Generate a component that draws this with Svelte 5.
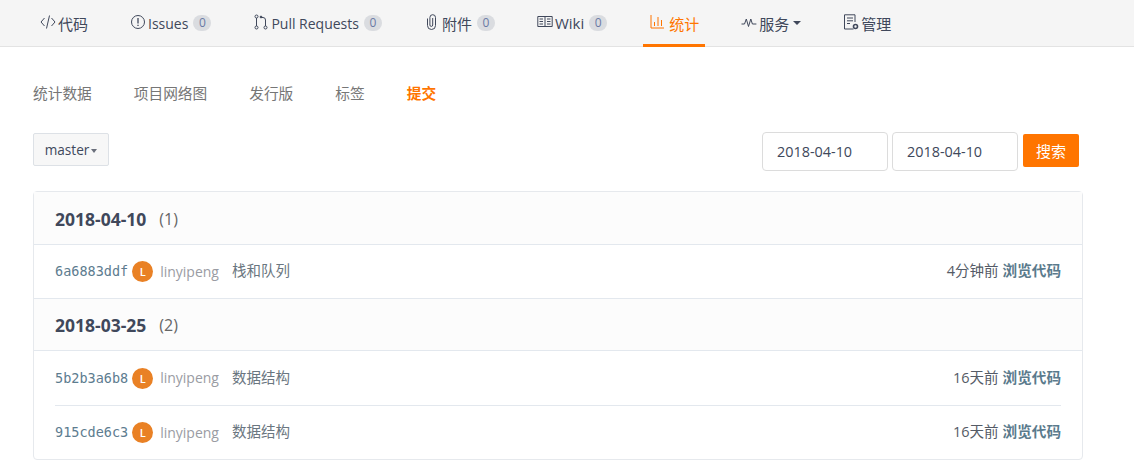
<script>
  const tabs = [
    { icon: 'code', label: '代码', big: true },
    { icon: 'issue', label: 'Issues', count: 0 },
    { icon: 'pull', label: 'Pull Requests', count: 0 },
    { icon: 'clip', label: '附件', count: 0, big: true },
    { icon: 'book', label: 'Wiki', count: 0, big: true },
    { icon: 'chart', label: '统计', active: true, big: true },
    { icon: 'pulse', label: '服务', caret: true, big: true },
    { icon: 'manage', label: '管理', big: true }
  ];

  const subnav = ['统计数据', '项目网络图', '发行版', '标签', '提交'];

  const groups = [
    {
      date: '2018-04-10',
      count: 1,
      commits: [{ sha: '6a6883ddf', msg: '栈和队列', time: '4分钟前' }]
    },
    {
      date: '2018-03-25',
      count: 2,
      commits: [
        { sha: '5b2b3a6b8', msg: '数据结构', time: '16天前' },
        { sha: '915cde6c3', msg: '数据结构', time: '16天前' }
      ]
    }
  ];
</script>

<div class="page">
  <nav class="tabs">
    {#each tabs as tab}
      <a class="tab" class:active={tab.active}>
        <svg class="icon" viewBox="0 0 16 16" width="16" height="16" fill="none" stroke="currentColor" stroke-width="1">
          {#if tab.icon === 'code'}
            <path d="M4.5 4 1 8l3.5 4M11.5 4 15 8l-3.5 4M9.5 1.5l-3 13" />
          {:else if tab.icon === 'issue'}
            <circle cx="8" cy="8" r="6.5" /><path d="M8 4v5.5M8 10.8v1.2" stroke-width="1.3" />
          {:else if tab.icon === 'pull'}
            <circle cx="3.5" cy="2.5" r="1.5" /><circle cx="3.5" cy="13.5" r="1.5" /><circle cx="12.5" cy="13.5" r="1.5" />
            <path d="M3.5 4v8M12.5 12V6q0-2.500-2.500-2.500H8" /><circle cx="8" cy="3" r=".9" fill="currentColor" />
          {:else if tab.icon === 'clip'}
            <path d="M3.500 4.500v7a4 4 0 0 0 8 0V3.500a2.800 2.800 0 0 0-5.600 0V11a1.400 1.400 0 0 0 2.800 0V4" />
          {:else if tab.icon === 'book'}
            <path d="M.8 2.500h14.400v10H.8zM8 2.500v10M2.500 5h3.500M2.500 7.500h3.500M2.500 10h3.500M10 5h3.500M10 7.500h3.500M10 10h3.500" />
          {:else if tab.icon === 'chart'}
            <path d="M2 1v13h13M5.500 8v4M9 3v9M12.500 6v6" />
          {:else if tab.icon === 'pulse'}
            <path d="M.5 10h3l1.800-5 2.200 7.500L9.800 5l1.600 5h4" />
          {:else}
            <path d="M10.500 15H1.500V.8H12V8M4 4h6M4 6.800h6M4 9.500h3" /><circle cx="12.500" cy="12.500" r="2" stroke-width="1.600" />
          {/if}
        </svg>
        <span class:big={tab.big}>{tab.label}</span>
        {#if tab.count !== undefined}<span class="count">{tab.count}</span>{/if}
        {#if tab.caret}<i class="caret"></i>{/if}
      </a>
    {/each}
  </nav>

  <main class="content">
    <div class="subnav">
      {#each subnav as item, i}
        <a class:current={i === subnav.length - 1}>{item}</a>
      {/each}
    </div>

    <div class="filter">
      <button class="branch">master<i class="caret small"></i></button>
      <div class="dates">
        <input value="2018-04-10" />
        <input value="2018-04-10" />
        <button class="search">搜索</button>
      </div>
    </div>

    <section class="list">
      {#each groups as group}
        <header class="date-row">
          <strong>{group.date}</strong>
          <span>({group.count})</span>
        </header>
        <div class="commits">
          {#each group.commits as commit}
            <div class="commit">
              <code>{commit.sha}</code>
              <span class="avatar">L</span>
              <span class="author">linyipeng</span>
              <span class="msg">{commit.msg}</span>
              <span class="time">{commit.time}</span>
              <a class="browse">浏览代码</a>
            </div>
          {/each}
        </div>
      {/each}
    </section>
  </main>
</div>

<style>
  :global(body) {
    margin: 0;
    background: #fff;
    font-family: "Open Sans", "Noto Sans CJK SC", sans-serif;
    font-size: 14px;
    color: #40485b;
  }

  .page {
    height: 461px;
    overflow: hidden;
  }

  .tabs {
    display: flex;
    height: 46px;
    padding-left: 34px;
    gap: 30px;
    background: #f5f5f5;
    border-bottom: 1px solid #e3e3e3;
  }

  .tab {
    display: flex;
    align-items: center;
    gap: 2px;
    padding: 2px 6px 0;
    height: 47px;
    box-sizing: border-box;
    border-bottom: 3px solid transparent;
    white-space: nowrap;
  }

  .tab .big {
    font-size: 15px;
  }

  .tab.active {
    gap: 4px;
    color: #ff7500;
    border-bottom-color: #ff7500;
  }

  .icon {
    flex: none;
    margin-top: -3px;
  }

  .count {
    margin-left: 3px;
    width: 18px;
    height: 16px;
    line-height: 16px;
    border-radius: 8px;
    background: #dadce0;
    color: #6a7aa5;
    font-size: 12px;
    text-align: center;
  }

  .caret {
    width: 0;
    height: 0;
    margin-left: 2px;
    border: 4px solid transparent;
    border-top-color: #40485b;
    border-bottom: 0;
  }

  .caret.small {
    display: inline-block;
    margin: 0 0 2px 2px;
    border-width: 4px 3.5px 0;
    border-top-color: #6a6f7b;
  }

  .content {
    padding: 0 51px 0 33px;
  }

  .subnav {
    display: flex;
    gap: 42px;
    height: 21px;
    line-height: 20px;
    padding-top: 36px;
    font-size: 14.7px;
    color: #767676;
  }

  .subnav a.current {
    color: #ff7500;
    font-weight: 700;
  }

  .filter {
    display: flex;
    justify-content: space-between;
    align-items: flex-start;
    margin-top: 28px;
  }

  .branch {
    width: 76px;
    height: 33px;
    margin-top: 1px;
    padding: 0;
    background: #f7f7f7;
    border: 1px solid #dde1e6;
    border-radius: 2px;
    color: #40485b;
    font: inherit;
    font-size: 13.6px;
  }

  .dates {
    display: flex;
    gap: 4px;
    margin-right: 4px;
    align-items: flex-start;
  }

  .dates input {
    width: 126px;
    height: 39px;
    box-sizing: border-box;
    padding: 0 14px;
    border: 1px solid #dcdcdc;
    border-radius: 4px;
    color: #40485b;
    font: inherit;
    font-size: 14.4px;
    outline: none;
  }

  .search {
    width: 56px;
    height: 33px;
    margin: 2px 0 0 1px;
    padding-bottom: 2px;
    background: #ff7500;
    border: 0;
    border-radius: 2px;
    color: #fff;
    font: inherit;
    font-size: 15px;
  }

  .list {
    margin-top: 20px;
    border: 1px solid #e6e9ed;
    border-radius: 4px;
  }

  .date-row {
    display: flex;
    gap: 13px;
    align-items: center;
    box-sizing: content-box;
    height: 52px;
    padding: 0 21px;
    background: #fcfcfc;
    border-bottom: 1px solid #e3e8ee;
  }

  .date-row:not(:first-child) {
    height: 51px;
  }

  .date-row strong,
  .date-row span {
    padding-top: 1px;
  }

  .date-row strong {
    font-size: 17.5px;
    color: #40485b;
  }

  .date-row span {
    color: #666;
    font-size: 16px;
  }

  .commits {
    padding: 0 21px;
    border-bottom: 1px solid #e3e8ee;
  }

  .commits:last-child {
    border-bottom: 0;
  }

  .commit {
    display: flex;
    align-items: center;
    height: 53px;
  }

  .commit + .commit {
    border-top: 1px solid #e3e8ee;
  }

  .commits:last-child .commit:first-child {
    height: 54px;
  }

  code {
    font-family: "DejaVu Sans Mono", monospace;
    font-size: 13.5px;
    margin-bottom: 1px;
    color: #5d7c8f;
  }

  .avatar {
    width: 21px;
    height: 21px;
    margin-left: 4px;
    border-radius: 50%;
    background: #e98125;
    color: #fff;
    font-size: 11px;
    font-weight: 600;
    line-height: 21px;
    text-align: center;
  }

  .author {
    margin: 0 0 1px 7px;
    color: #9a9ca3;
  }

  .msg {
    margin: 0 0 4px 13px;
    font-size: 14.5px;
    color: #6a7680;
  }

  .time {
    margin: 0 0 4px auto;
    font-size: 14.5px;
    color: #555b66;
  }

  .browse {
    margin: 0 0 4px 4px;
    font-size: 14.6px;
    color: #5a7a8c;
    font-weight: 700;
  }
</style>
